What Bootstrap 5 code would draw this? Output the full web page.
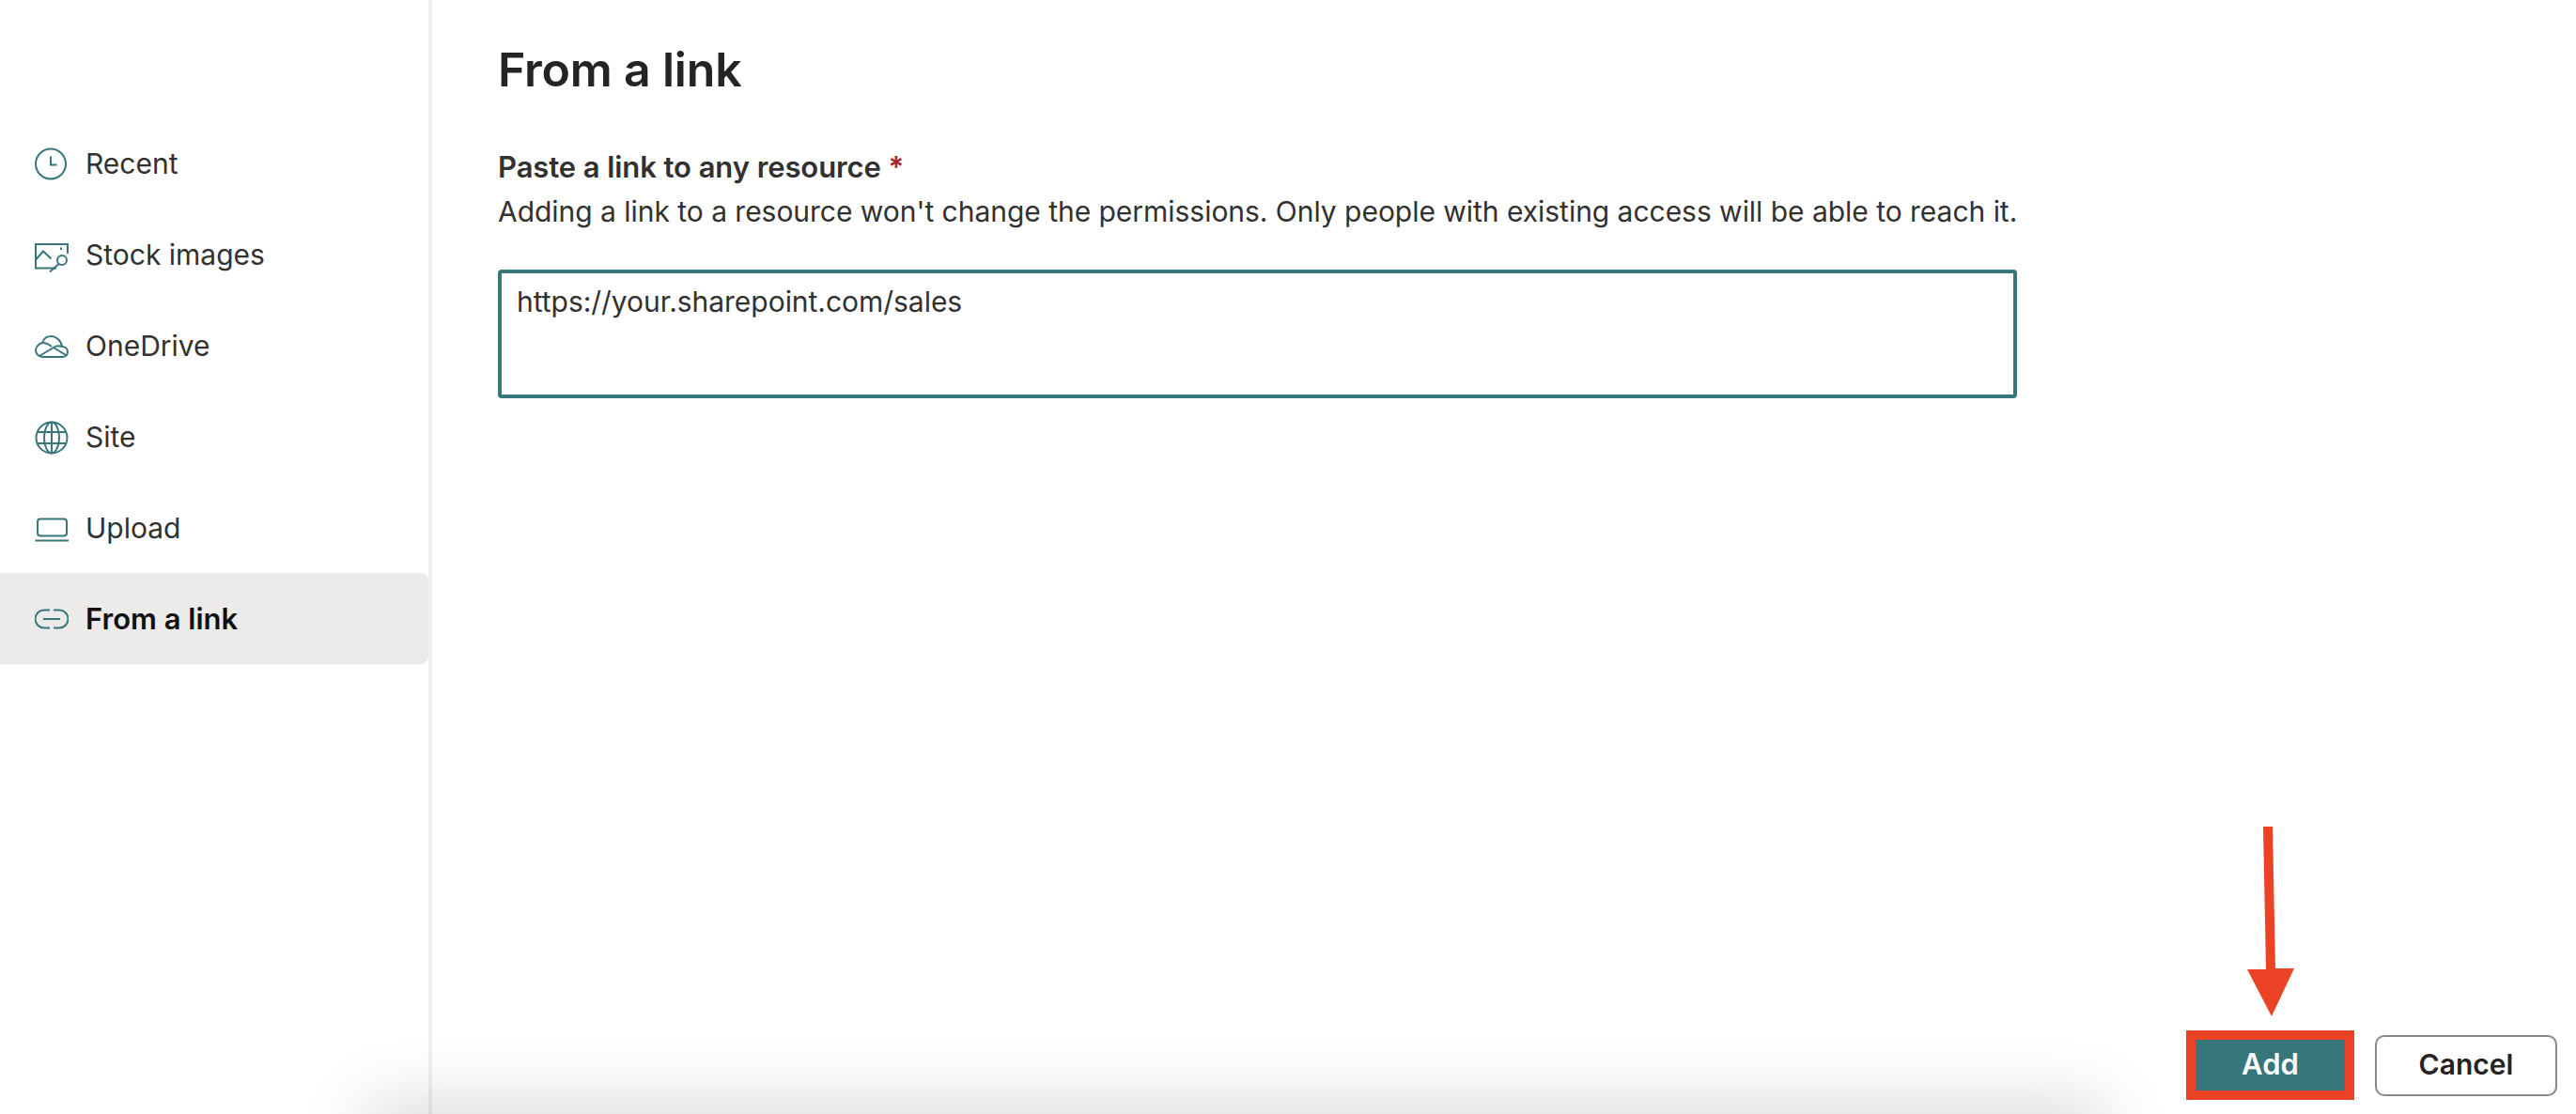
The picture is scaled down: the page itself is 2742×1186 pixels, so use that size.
<!DOCTYPE html>
<html lang="en">
<head>
  <meta charset="UTF-8" />
  <title>From a link</title>
  <link href="https://cdn.jsdelivr.net/npm/bootstrap@5.3.0/dist/css/bootstrap.min.css" rel="stylesheet" />
  <style>
    body {
      font-family: Inter, "Noto Sans", sans-serif;
      color: #323130;
      background: #fff;
      height: 100vh;
      overflow: hidden;
    }
    .side-panel {
      width: 460px;
      padding-top: 125px;
      border-right: 4px solid #f0f0f0;
    }
    .side-item {
      height: 97px;
      padding: 2px 0 0 37px;
      gap: 17px;
      font-size: 30px;
      color: #323130;
      border-radius: 0 8px 8px 0;
    }
    .side-item:hover { color: #323130; }
    .side-item.active-item {
      background: #edebe9;
      font-weight: 600;
      font-size: 31px;
      color: #111;
    }
    .side-icon {
      width: 36px;
      height: 36px;
      flex: none;
      fill: none;
      stroke: #37767b;
      stroke-width: 2;
      margin-right: 1px;
    }
    .main-panel { padding: 0 20px 15px 70px; position: relative; }
    .page-title {
      font-size: 50px;
      font-weight: 600;
      letter-spacing: -.2px;
      line-height: 64px;
      margin: 42px 0 50px;
      color: #252423;
    }
    .field-label {
      font-size: 31px;
      font-weight: 600;
      letter-spacing: -.08px;
      line-height: 44px;
      margin: 0;
    }
    .req-mark { color: #a4262c; }
    .field-help { font-size: 30px; letter-spacing: -.03px; line-height: 50px; margin-bottom: 37px; }
    .link-box.form-control {
      width: 1617px;
      height: 137px;
      border: 4px solid #37767b;
      border-radius: 4px;
      padding: 8px 16px;
      font-size: 30px;
      letter-spacing: -.03px;
      line-height: 44px;
      color: #323130;
      resize: none;
      box-shadow: none;
    }
    .action-row { gap: 22px; position: relative; z-index: 2; }
    .btn-add.btn {
      width: 179px;
      height: 74px;
      border: 10px solid #ec4225;
      border-radius: 0;
      background: #37767b;
      color: #fff;
      font-size: 31px;
      font-weight: 600;
      padding: 0 0 2px;
    }
    .btn-cancel.btn {
      width: 194px;
      height: 65px;
      border: 2px solid #8a8886;
      border-radius: 10px;
      background: #fff;
      color: #252423;
      font-size: 30px;
      font-weight: 600;
      padding: 0 0 2px;
    }
    .bottom-glow {
      position: absolute;
      left: 400px;
      width: 1830px;
      bottom: -40px;
      height: 40px;
      box-shadow: 0 0 70px 10px rgba(0, 0, 0, .17);
    }
    .add-arrow {
      position: absolute;
      left: 2380px;
      top: 870px;
      width: 70px;
      height: 220px;
      z-index: 3;
    }
  </style>
</head>
<body class="d-flex">
  <nav class="side-panel nav flex-column flex-nowrap flex-shrink-0">
    <a class="side-item nav-link d-flex align-items-center" href="#">
      <svg class="side-icon" viewBox="0 0 36 36"><circle cx="17" cy="17.5" r="16"/><path d="M17 9.5V18.5H23.5"/></svg>
      Recent
    </a>
    <a class="side-item nav-link d-flex align-items-center" href="#">
      <svg class="side-icon" viewBox="0 0 36 36"><path d="M23 31.5H1V6H35V16"/><path d="M1 22.5L9 13.5L17.5 21.5"/><circle cx="29" cy="23" r="5"/><path d="M25.5 27L16 35.5"/><path d="M28 9.5V12"/></svg>
      Stock images
    </a>
    <a class="side-item nav-link d-flex align-items-center" href="#">
      <svg class="side-icon" viewBox="0 0 36 36"><path d="M9 29H29C33 29 35 26.5 35 23.5C35 20 32 18 29 18C28 11 22 6.5 16.5 7C12.5 7 9.5 10 8 14C4 15 1 18.5 1 22C1 26 4.5 29 9 29Z"/><path d="M8 14C12 14 15 15.5 18 18"/><path d="M5 28L20 19C22 17.5 26 17 29 18"/><path d="M20 19L33 27"/></svg>
      OneDrive
    </a>
    <a class="side-item nav-link d-flex align-items-center" href="#">
      <svg class="side-icon" viewBox="0 0 36 36"><circle cx="18" cy="18" r="16.5"/><ellipse cx="18" cy="18" rx="8" ry="16.5"/><path d="M3 12H33M3 24H33M18 1.5V34.5"/></svg>
      Site
    </a>
    <a class="side-item nav-link d-flex align-items-center" href="#">
      <svg class="side-icon" viewBox="0 0 36 36"><rect x="3" y="7.5" width="31" height="18" rx="3"/><path d="M0.5 30.5H36"/></svg>
      Upload
    </a>
    <a class="side-item active-item nav-link d-flex align-items-center" href="#">
      <svg class="side-icon" viewBox="0 0 36 36"><path d="M16 7.5H10A9.5 9.5 0 0 0 10 26.5H16"/><path d="M20 7.5H26A9.5 9.5 0 0 1 26 26.5H20"/><path d="M9 17H27"/></svg>
      From a link
    </a>
  </nav>

  <main class="main-panel d-flex flex-column flex-grow-1">
    <h1 class="page-title">From a link</h1>
    <label class="field-label" for="linkBox">Paste a link to any resource <span class="req-mark">*</span></label>
    <p class="field-help">Adding a link to a resource won't change the permissions. Only people with existing access will be able to reach it.</p>
    <textarea id="linkBox" class="link-box form-control">https://your.sharepoint.com/sales</textarea>
    <div class="action-row d-flex justify-content-end align-items-center mt-auto">
      <button class="btn btn-add" type="button">Add</button>
      <button class="btn btn-cancel" type="button">Cancel</button>
    </div>
  </main>

  <div class="bottom-glow"></div>
  <svg class="add-arrow" viewBox="2380 870 70 220">
    <path d="M2409 880H2419L2422 1031L2442 1031L2418 1082L2392 1032L2412 1032Z" fill="#ec4225"/>
  </svg>
</body>
</html>
